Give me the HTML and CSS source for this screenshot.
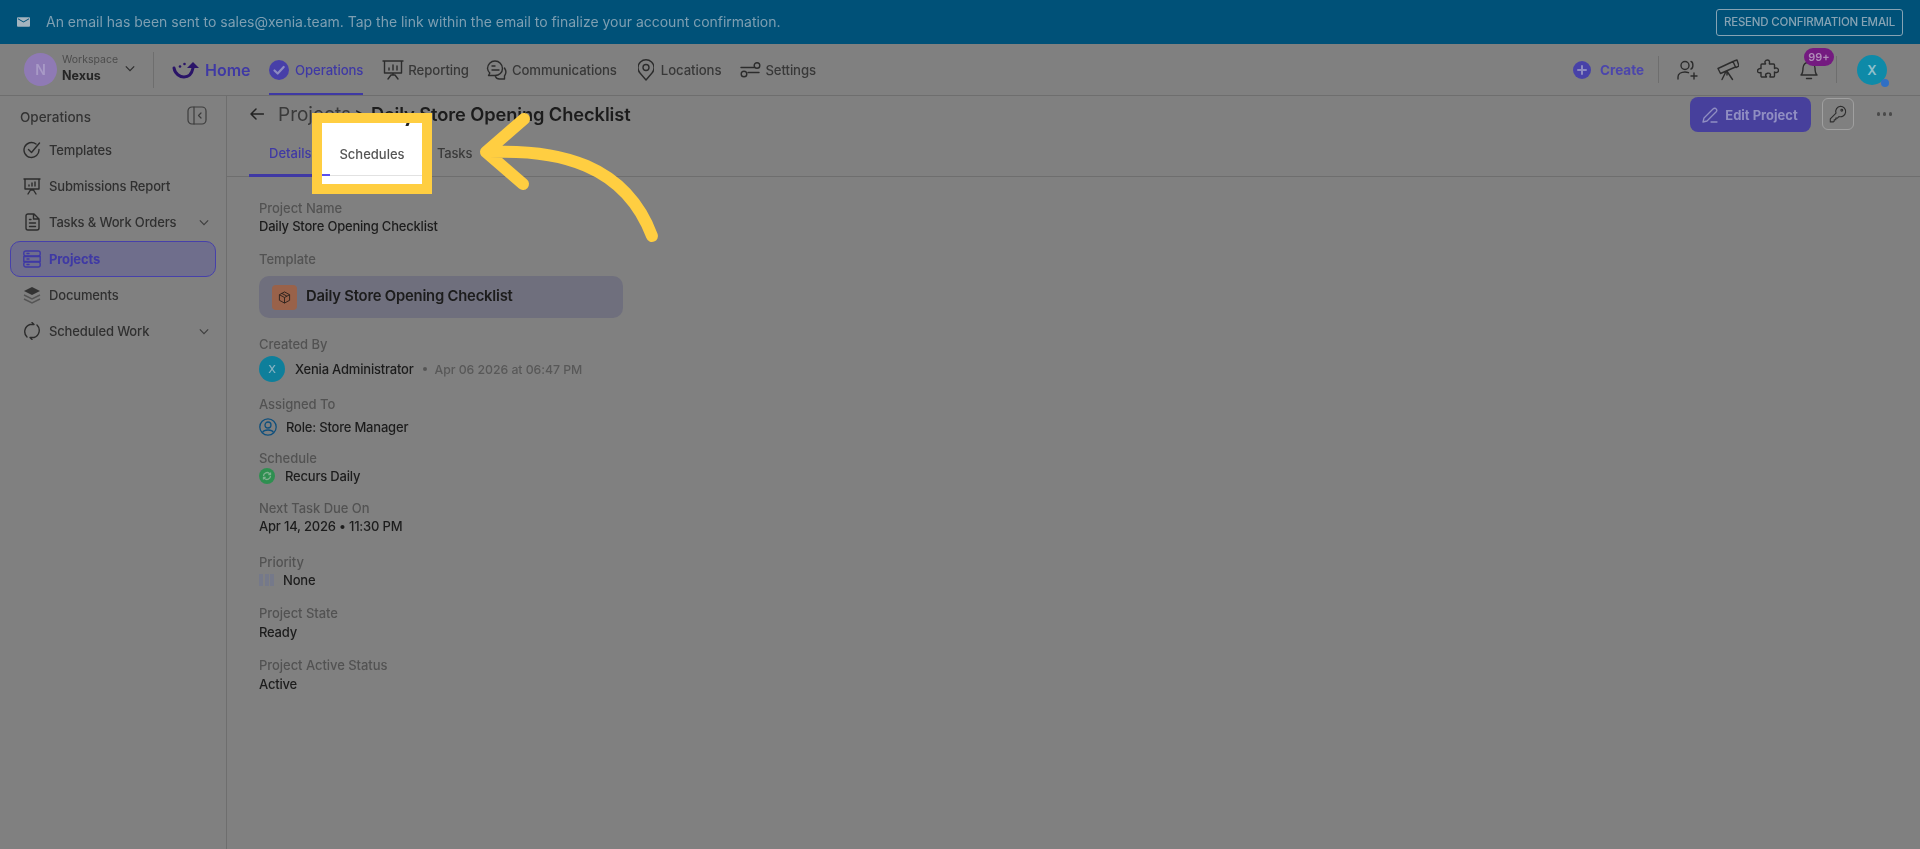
FILE: index.html
```html
<!DOCTYPE html>
<html lang="en">
<head>
<meta charset="utf-8">
<title>Daily Store Opening Checklist</title>
<link rel="stylesheet" href="styles.css">
</head>
<body>
<div class="app">
  <div class="banner">
    <svg class="mail" viewBox="0 0 14 10"><path d="M1 0h12a1 1 0 0 1 1 1v8a1 1 0 0 1-1 1H1a1 1 0 0 1-1-1V1a1 1 0 0 1 1-1zm0 2l6 3.600L13 2V1L7 4.400 1 1z" fill-rule="evenodd"/></svg>
    <span class="banner-text">An email has been sent to sales@xenia.team. Tap the link within the email to finalize your account confirmation.</span>
    <span class="resend">RESEND CONFIRMATION EMAIL</span>
  </div>

  <nav class="nav">
    <div class="ws-avatar">N</div>
    <div class="ws-text"><span class="ws-small">Workspace</span><span class="ws-name">Nexus</span></div>
    <svg class="ws-chev" viewBox="0 0 12 8"><path d="M1 1.500l5 5 5-5"/></svg>
    <span class="nav-sep"></span>
    <svg class="logo" viewBox="0 0 28 17"><path class="logo-smile" d="M2 6c1 6 6 9 10 9 5 0 8-4 9-9"/><path class="logo-head" d="M21 0l6 6h-12z"/><circle class="logo-head" cx="8" cy="4.500" r="1.300"/><circle class="logo-head" cx="12.500" cy="2" r="1.300"/></svg>
    <span class="home">Home</span>
    <div class="nav-item active">
      <svg class="ic20" viewBox="0 0 20 20"><circle cx="10" cy="10" r="10" fill="#473fa8"/><path d="M5.500 10.500l3.200 3 6-6.500" fill="none" stroke="#8c8ac0" stroke-width="2.200" stroke-linecap="round" stroke-linejoin="round"/></svg>
      <span>Operations</span>
    </div>
    <div class="nav-item ni-rep">
      <svg class="ic22 line" viewBox="0 0 22 22"><path d="M1 2h20M2.500 2v12h17V2M11 14v2M6 20l3-4h4l3 4M7 11V9M11 11V6M15 11V7"/></svg>
      <span>Reporting</span>
    </div>
    <div class="nav-item ni-com">
      <svg class="ic22 line" viewBox="0 0 22 22"><path d="M9 2a7.500 7.500 0 0 1 7.500 7.500c0 4-3.300 7-7.500 7H2.500l1.300-2.500A7.300 7.300 0 0 1 1.500 9.500 7.500 7.500 0 0 1 9 2zM6 7h3M6 11h7M18.500 9c2 3 1.500 6 0 8v3h-5c-2 0-3.500-1-4-2.500"/></svg>
      <span>Communications</span>
    </div>
    <div class="nav-item ni-loc">
      <svg class="pin line" viewBox="3 0 16 22"><path d="M11 21l-6-7a8 8 0 1 1 12 0z"/><circle cx="11" cy="8.500" r="3"/></svg>
      <span>Locations</span>
    </div>
    <div class="nav-item">
      <svg class="ic22 line" viewBox="0 0 22 22"><path d="M2 8.500h13M20 13.500H9"/><circle cx="18" cy="6.500" r="2.800"/><circle cx="5" cy="15" r="2.800"/></svg>
      <span>Settings</span>
    </div>
    <div class="nav-right">
      <svg class="create-ic" viewBox="0 0 18 18"><circle cx="9" cy="9" r="9" fill="#4741a8"/><path d="M9 5v8M5 9h8" stroke="#8c8ac0" stroke-width="2" stroke-linecap="round"/></svg>
      <span class="create">Create</span>
      <span class="sep-a"></span>
      <svg class="ic22 line tool" viewBox="0 0 22 22"><circle cx="8" cy="6.500" r="4"/><path d="M1 20v-2c0-3 3-5 7-5 1.500 0 2.500.3 3.500.7M14 2.500c2.500.5 2.500 7 0 7.500M17 14v6M14 17h6"/></svg>
      <svg class="ic22 line tool" viewBox="0 0 22 22"><path d="M1 9.500l15-7 2.500 5.500-15 6.500zM17 2l3-1 2 6-3 1.500M9 12.500l-4 8M10 12l.5 1 5 7.500M10 12v4"/></svg>
      <svg class="ic22 line tool" viewBox="0 0 22 22"><path d="M8 2.500c1-2 4-2 4.500 0 .3 1-.5 2 0 2.500h4c.5 0 1 .5 1 1v3.500c1-1 4-.5 4 1.800S19 14 17.500 13v4c0 .5-.5 1-1 1H13c-.5-.5 1-1.500.3-3-.8-1.500-4.800-1-4.800 1 0 1 1.200 1.500 1 2H5c-.5 0-1-.5-1-1v-3.500c-1.200.5-3.500.5-3.500-1.500S3 9 4 9.700V6c0-.5.500-1 1-1h3.500c.3-.5-1-1.300-.5-2.500z"/></svg>
      <div class="bell-wrap">
        <svg class="ic22 line" viewBox="0 0 22 22"><path d="M3 16c2-2 2-4 2-7a6 6 0 0 1 12 0c0 3 0 5 2 7zM8.500 19.500h5"/></svg>
        <span class="badge">99+</span>
      </div>
      <span class="sep-b"></span>
      <div class="me">X<span class="me-dot"></span></div>
    </div>
  </nav>

  <div class="body">
    <aside class="side">
      <div class="side-head">
        <span>Operations</span>
        <svg class="collapse" viewBox="0 0 20 19"><rect x="1" y="1" width="18" height="17" rx="4"/><path d="M7 1v17M14 7l-2.500 2.500L14 12"/></svg>
      </div>
      <div class="side-item">
        <svg class="ic18 line" viewBox="0 0 18 18"><path d="M16 8.500a7.500 7.500 0 1 1-3-5.500M5.500 8.500l3 3L16.500 2"/></svg>
        <span>Templates</span>
      </div>
      <div class="side-item">
        <svg class="ic18 line" viewBox="0 0 18 18"><path d="M1 2h16M2 2v10h14V2M9 12v1M5 17l2.500-4h3L13 17M6 9V8M9 9V6M12 9V5"/></svg>
        <span>Submissions Report</span>
      </div>
      <div class="side-item">
        <svg class="ic18 line" viewBox="0 0 18 18"><path d="M3 3a2 2 0 0 1 2-2h6l5 5v9a2 2 0 0 1-2 2H5a2 2 0 0 1-2-2zM10.500 1v5H16M6.500 10h6M6.500 13.500h6M6.500 6.500h1.500"/></svg>
        <span>Tasks &amp; Work Orders</span>
        <svg class="side-chev" viewBox="0 0 12 8"><path d="M1 1.500l5 5 5-5"/></svg>
      </div>
      <div class="side-item current">
        <svg class="ic18 line indigo" viewBox="0 0 18 18"><rect x="0.800" y="1" width="16.400" height="5" rx="2"/><rect x="0.800" y="6.500" width="16.400" height="5" rx="0"/><rect x="0.800" y="12" width="16.400" height="5" rx="2"/><path d="M4 3.500h2M4 9h2M4 14.500h2"/></svg>
        <span>Projects</span>
      </div>
      <div class="side-item">
        <svg class="ic18" viewBox="0 0 18 18"><path d="M9 1l8 4-8 4-8-4z" fill="#333"/><path d="M1 9l8 4 8-4M1 13l8 4 8-4" fill="none" stroke="#555" stroke-width="1.400"/></svg>
        <span>Documents</span>
      </div>
      <div class="side-item">
        <svg class="ic18 line" viewBox="0 0 18 18"><path d="M4 15a7.500 7.500 0 0 1 3-12.500h4l-2-2M14 3a7.500 7.500 0 0 1-3 12.500H7l2 2"/></svg>
        <span>Scheduled Work</span>
        <svg class="side-chev" viewBox="0 0 12 8"><path d="M1 1.500l5 5 5-5"/></svg>
      </div>
    </aside>

    <main class="main">
      <header class="head">
        <svg class="back" viewBox="0 0 14 12"><path d="M13.500 6H1M6 1L1 6l5 5"/></svg>
        <div class="crumb"><span class="crumb-link">Projects</span><span class="crumb-gt">&gt;</span><strong>Daily Store Opening Checklist</strong></div>
        <div class="actions">
          <div class="edit">
            <svg viewBox="0 0 16 16"><path d="M1 15l1-4L11 2c1-1 2.500-1 3.200 0 .7.700.7 2 0 2.800L5 14zM9 15h6"/></svg>
            <span>Edit Project</span>
          </div>
          <div class="key">
            <svg viewBox="0 0 18 18"><path d="M11.500 1.200a5.300 5.300 0 1 1-1.600 10.400L8.400 13.100H6.800v1.600H5.200v1.500l-.8.700H1.300v-3l5.700-5.700a5.300 5.300 0 0 1 4.500-7z"/><circle cx="12.800" cy="5.200" r="0.900"/></svg>
          </div>
          <span class="more"><i></i><i></i><i></i></span>
        </div>
      </header>

      <div class="tabs">
        <span class="tab tab-on">Details</span>
        <span class="tab tab-mid">Schedules</span>
        <span class="tab tab-last">Tasks</span>
      </div>

      <section class="fields">
        <div class="field">
          <div class="label">Project Name</div>
          <div class="value">Daily Store Opening Checklist</div>
        </div>
        <div class="field f-tpl">
          <div class="label">Template</div>
          <div class="tpl">
            <span class="tpl-ic"><svg viewBox="0 0 14 14"><path d="M7 1l5.500 3v6L7 13l-5.500-3V4zM1.500 4L7 7l5.500-3M7 7v6M4 2.500l5.500 3"/></svg></span>
            <span class="tpl-name">Daily Store Opening Checklist</span>
          </div>
        </div>
        <div class="field f-by">
          <div class="label">Created By</div>
          <div class="row by">
            <span class="by-av">X</span>
            <span class="value">Xenia Administrator</span>
            <span class="by-dot"></span>
            <span class="by-date">Apr 06 2026 at 06:47 PM</span>
          </div>
        </div>
        <div class="field f-role">
          <div class="label">Assigned To</div>
          <div class="row role">
            <svg viewBox="0 0 18 18"><circle cx="9" cy="9" r="8.200"/><circle cx="9" cy="7" r="3"/><path d="M3.500 14.500c1-2 3-2.500 5.500-2.500s4.500.5 5.500 2.500"/></svg>
            <span class="value">Role: Store Manager</span>
          </div>
        </div>
        <div class="field f-sch">
          <div class="label">Schedule</div>
          <div class="row sch">
            <svg viewBox="0 0 16 16"><circle cx="8" cy="8" r="8" fill="#2e8f50"/><path d="M4.500 8a3.500 3.500 0 0 1 6-2.400l1 1M11.500 8a3.500 3.500 0 0 1-6 2.400l-1-1M11.500 4.500v2.200H9.300M4.500 11.500V9.300h2.200" fill="none" stroke="#7fb08f" stroke-width="1.300"/></svg>
            <span class="value">Recurs Daily</span>
          </div>
        </div>
        <div class="field f-next">
          <div class="label">Next Task Due On</div>
          <div class="value">Apr 14, 2026 • 11:30 PM</div>
        </div>
        <div class="field">
          <div class="label">Priority</div>
          <div class="row pri"><span class="bars"><i></i><i></i><i></i></span><span class="value">None</span></div>
        </div>
        <div class="field f-gap">
          <div class="label">Project State</div>
          <div class="value">Ready</div>
        </div>
        <div class="field f-gap">
          <div class="label">Project Active Status</div>
          <div class="value">Active</div>
        </div>
      </section>
    </main>
  </div>
</div>

<div class="spot">
  <span class="spot-y"></span>
  <span class="spot-text">Schedules</span>
  <span class="spot-line"><i></i></span>
</div>
<svg class="pointer" viewBox="0 0 200 140"><path d="M19 52C88 49 155 64 182 136M54 19L16 52l37 32"/></svg>
</body>
</html>
```
FILE: styles.css
```css
* { box-sizing: border-box; }
html, body { margin: 0; height: 100%; }
body {
  position: relative;
  width: 1920px;
  height: 849px;
  overflow: hidden;
  background: #808080;
  font-family: Inter, "Liberation Sans", sans-serif;
  color: #303030;
}
.app { display: flex; flex-direction: column; height: 849px; filter: blur(0.4px); }
svg { display: block; flex: none; }
.line { fill: none; stroke: #2c2c2c; stroke-width: 1.400; stroke-linecap: round; stroke-linejoin: round; }

/* banner */
.banner {
  height: 44px;
  background: #005178;
  display: flex;
  align-items: center;
  padding: 0 17px;
  flex: none;
}
.mail { width: 13px; height: 10px; fill: #a4b4bf; margin: 0 16px 1px 0; }
.banner-text { font-size: 14px; color: #7e9fb2; letter-spacing: -0.010px; margin-bottom: 2px; }
.resend {
  margin-left: auto;
  width: 187px;
  height: 27px;
  border: 1px solid #86a3b4;
  border-radius: 3px;
  color: #86a3b4;
  font-size: 11.500px;
  font-weight: 500;
  letter-spacing: -0.200px;
  display: flex;
  align-items: center;
  justify-content: center;
}

/* nav */
.nav {
  height: 52px;
  display: flex;
  align-items: center;
  border-bottom: 1px solid #6e6e6e;
  padding-left: 24px;
  flex: none;
}
.ws-avatar {
  width: 33px; height: 33px; border-radius: 50%;
  background: #8f7ab5; color: #a89ac6;
  font-size: 14px; font-weight: 600;
  display: flex; align-items: center; justify-content: center;
}
.ws-text { display: flex; flex-direction: column; margin: 0 0 4px 5px; width: 63px; }
.ws-small { font-size: 10.500px; color: #4c4c4c; line-height: 15px; }
.ws-name { font-size: 12.500px; font-weight: 700; color: #262626; line-height: 17px; }
.ws-chev { width: 10px; height: 7px; fill: none; stroke: #2e2e2e; stroke-width: 1.500; margin: 0 18px 2px 0; }
.nav-sep { width: 1px; height: 36px; background: #6e6e6e; margin-right: 18px; }
.logo { width: 28px; height: 17px; margin-top: 2px; }
.logo-smile { fill: none; stroke: #2a1468; stroke-width: 3; stroke-linecap: round; }
.logo-head { fill: #2a1468; }
.home { width: 45px; font-size: 16px; font-weight: 600; color: #3f39a4; margin-left: 5px; margin-right: 19px; line-height: 22px; }
.nav-item {
  display: flex; align-items: center; gap: 4px;
  height: 51px;
  font-size: 13.200px; font-weight: 500; color: #383838;
  margin-right: 19px;
  letter-spacing: -0.100px;
}
.nav-item.active { color: #3f39a4; box-shadow: inset 0 -2px 0 #3f39a4; gap: 6px; }
.ni-rep { margin-right: 17px; }
.ni-com { margin-right: 21px; }
.ni-loc { margin-right: 18px; gap: 7px; }
.pin { width: 16px; height: 22px; }
.ic20 { width: 20px; height: 20px; }
.ic22 { width: 22px; height: 22px; }
.ic18 { width: 18px; height: 18px; }
.nav-right { margin-left: auto; display: flex; align-items: center; padding-right: 33px; height: 51px; }
.create-ic { width: 18px; height: 18px; margin-right: 9px; }
.create { font-size: 13.500px; font-weight: 700; color: #4b45ac; width: 58px; }
.sep-a, .sep-b { width: 1px; height: 27px; background: #6e6e6e; }
.tool { margin-left: 18px; }
.bell-wrap { position: relative; margin-left: 19px; width: 38px; }
.badge {
  position: absolute; left: 6px; top: -11px;
  width: 30px; height: 18px; border-radius: 9px;
  background: #741a80; color: #b08cb8;
  font-size: 11px; font-weight: 600;
  display: flex; align-items: center; justify-content: center;
}
.sep-b { margin-right: 20px; }
.me {
  position: relative;
  width: 30px; height: 30px; border-radius: 50%;
  background: #0e8aa8; color: #8fc0cc;
  font-size: 13px; font-weight: 600;
  display: flex; align-items: center; justify-content: center;
}
.me-dot { position: absolute; right: -2px; bottom: -2px; width: 8px; height: 8px; border-radius: 50%; background: #2f6fc4; }

/* body */
.body { flex: 1; display: flex; min-height: 0; }
.side { width: 227px; border-right: 1px solid #6e6e6e; padding: 11px 10px 0; flex: none; }
.side-head {
  display: flex; align-items: center; justify-content: space-between;
  height: 20px; padding: 0 9px 0 10px; margin-bottom: 5px;
  font-size: 13.500px; font-weight: 500; color: #333;
}
.collapse { width: 20px; height: 19px; margin-bottom: 4px; fill: none; stroke: #3c3c3c; stroke-width: 1.200; stroke-linecap: round; stroke-linejoin: round; }
.side-item {
  display: flex; align-items: center; gap: 8px;
  height: 36.200px; padding: 0 7px 0 13px;
  font-size: 13px; font-weight: 500; color: #303030;
  letter-spacing: -0.150px;
}
.side-chev { width: 10px; height: 7px; margin-left: auto; fill: none; stroke: #3e3e3e; stroke-width: 1.400; }
.current {
  background: #6f6e8c;
  border: 1px solid #4640aa;
  border-radius: 10px;
  color: #3f39a4;
  font-weight: 700;
  width: 206px;
  padding-left: 12px;
}
.indigo { stroke: #3f39a4; }

/* main */
.main { flex: 1; min-width: 0; }
.head { height: 38px; display: flex; align-items: flex-start; padding: 1px 28px 0 23px; }
.back { width: 14px; height: 12px; margin-top: 11px; fill: none; stroke: #222; stroke-width: 1.500; stroke-linecap: round; stroke-linejoin: round; }
.crumb { display: flex; align-items: center; margin: 4px 0 0 14px; height: 26px; font-size: 19px; color: #3a3a3a; }
.crumb-gt { margin: 0 4.500px 0 3px; color: #222; }
.crumb strong { font-size: 18.300px; font-weight: 600; color: #1c1c1c; letter-spacing: -0.100px; }
.actions { margin-left: auto; display: flex; align-items: flex-start; }
.edit {
  width: 121px; height: 35px; border-radius: 8px;
  background: #47409c; color: #908ec2;
  font-size: 13px; font-weight: 700;
  display: flex; align-items: center; justify-content: center; gap: 7px;
}
.edit svg { width: 16px; height: 16px; fill: none; stroke: #908ec2; stroke-width: 1.300; stroke-linecap: round; stroke-linejoin: round; }
.key {
  width: 32px; height: 32px; margin: 1px 0 0 11px;
  border: 1px solid #a0a0a0; border-radius: 6px;
  display: flex; align-items: center; justify-content: center;
}
.key svg { width: 18px; height: 18px; fill: none; stroke: #2e2e2e; stroke-width: 1.100; stroke-linejoin: round; }
.more { display: flex; gap: 2.500px; margin: 15px 0 0 23px; }
.more i { width: 3.500px; height: 3.500px; border-radius: 50%; background: #4a4a4a; }

.tabs {
  display: flex; align-items: stretch;
  height: 43px;
  border-bottom: 1px solid #6e6e6e;
  padding-left: 22px;
  font-size: 13px; font-weight: 500; color: #3a3a3a;
}
.tab { display: flex; align-items: center; padding-bottom: 5px; }
.tab-on { width: 63px; padding-left: 20px; color: #3f39a4; box-shadow: 0 1px 0 #3f39a4, inset 0 -2px 0 #3f39a4; }
.tab-mid { width: 125px; padding-left: 28px; }
.tab-last { letter-spacing: -0.200px; }

/* fields */
.fields { padding: 22px 0 0 32px; font-size: 13px; font-weight: 500; }
.field { margin-bottom: 15px; }
.label { color: #525252; line-height: 18px; letter-spacing: -0.050px; }
.value { color: #1c1c1c; line-height: 18px; letter-spacing: -0.200px; }
.row { display: flex; align-items: center; }
.f-tpl { margin-bottom: 17px; }
.tpl {
  width: 364px; height: 42px; margin-top: 8px; padding-left: 13px;
  background: #6f6f7d; border-radius: 10px;
  display: flex; align-items: center; gap: 9px;
}
.tpl-ic { width: 25px; height: 25px; border-radius: 4px; background: #99624a; display: flex; align-items: center; justify-content: center; }
.tpl-ic svg { width: 13px; height: 13px; fill: none; stroke: #2c211c; stroke-width: 1; stroke-linejoin: round; }
.tpl-name { font-size: 14.800px; font-weight: 600; color: #1c1c1c; letter-spacing: -0.200px; margin-bottom: 2px; }
.by { margin-top: 3px; height: 26px; }
.f-by { margin-bottom: 13px; }
.by-av { width: 26px; height: 26px; border-radius: 50%; background: #0e7f9b; color: #85b2c2; display: flex; align-items: center; justify-content: center; font-size: 11px; margin-right: 10px; }
.by-dot { width: 4px; height: 4px; border-radius: 50%; background: #555; margin: 0 8px 0 9px; }
.by-date { font-size: 12.300px; color: #585858; letter-spacing: -0.050px; }
.role { margin-top: 5px; gap: 9px; }
.role svg { width: 18px; height: 18px; fill: none; stroke: #0f4f7c; stroke-width: 1.300; }
.f-role { margin-bottom: 13px; }
.sch { gap: 10px; }
.sch svg { width: 16px; height: 16px; }
.f-sch { margin-bottom: 14px; }
.f-next { margin-bottom: 17.500px; }
.f-gap .value { margin-top: 1px; }
.pri { gap: 9px; }
.bars { display: flex; gap: 1.500px; }
.bars i { width: 4px; height: 12px; background: #75798a; }

/* spotlight over the page */
.spot {
  position: absolute; left: 312px; top: 113px;
  width: 120px; height: 81px;
  border: 10px solid #ffce41;
  background: #fff;
  display: flex; align-items: center; justify-content: center;
  font-size: 13px; font-weight: 500; color: #555;
  filter: blur(0.3px);
}
.spot-y { position: absolute; left: 84px; top: 0; width: 3px; height: 3px; background: #222; transform: skewX(-20deg); }
.spot-line { position: absolute; left: 0; right: 0; bottom: 8px; height: 1px; background: #e2e2e2; }
.spot-line i { position: absolute; left: 0; bottom: 0; width: 8px; height: 2px; background: #5a50f0; }
.pointer {
  position: absolute; left: 470px; top: 100px;
  width: 200px; height: 140px;
  fill: none; stroke: #ffce41; stroke-width: 12; stroke-linecap: round; stroke-linejoin: round;
  overflow: visible;
}
```
